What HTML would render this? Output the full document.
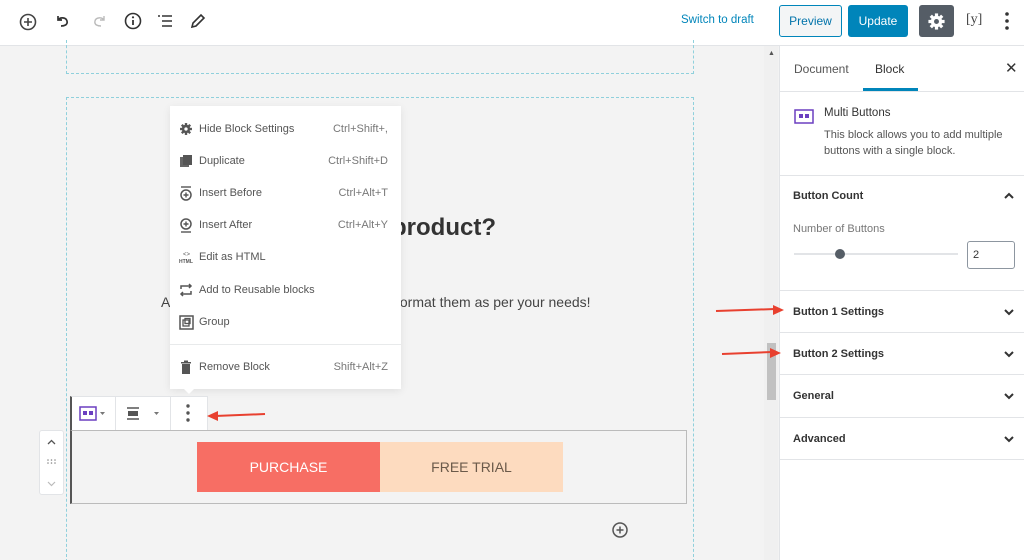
<!DOCTYPE html>
<html style="width:1024px;height:560px;overflow:hidden"><head><meta charset="utf-8"><style>
*{box-sizing:border-box;margin:0;padding:0}
body{width:1024px;height:560px;overflow:hidden;background:#f3f3f3;font-family:"Liberation Sans",sans-serif;position:relative;color:#333}
.a{position:absolute}
.hdr{left:0;top:0;width:1024px;height:46px;background:#fff;border-bottom:1px solid #e2e4e7}
.dash{border:1px dashed #8fd0dc}
.menu{left:170px;top:106px;width:231px;height:283px;background:#fff;box-shadow:0 2px 8px rgba(0,0,0,.08);font-size:11px;color:#555}
.mi{position:absolute;left:0;width:231px;height:20px;line-height:20px}
.mi .t{position:absolute;left:29px}
.mi .k{position:absolute;right:13px;color:#777}
.mi svg{position:absolute;left:9px;top:3px}
.side{left:779px;top:46px;width:245px;height:514px;background:#fff;border-left:1px solid #e2e4e7}
.row{position:absolute;left:0;width:245px;border-top:1px solid #e2e4e7;font-size:11px;font-weight:bold;color:#333}
.row span{position:absolute;left:13px}
.chev{position:absolute;right:10px}
</style></head><body>
<div class="a hdr">
<svg class="a" style="left:18px;top:12px" width="20" height="20" viewBox="0 0 20 20"><circle cx="10" cy="10" r="7.5" fill="none" stroke="#444" stroke-width="1.6"/><path d="M10 6v8M6 10h8" stroke="#444" stroke-width="1.6"/></svg>
<svg class="a" style="left:54px;top:12px" width="18" height="18" viewBox="0 0 18 18"><path d="M4 4v4h4M4 8c2-3 8-3 9 1s-3 5-6 5" fill="none" stroke="#333" stroke-width="1.7"/></svg>
<svg class="a" style="left:90px;top:12px" width="18" height="18" viewBox="0 0 18 18"><path d="M14 4v4h-4M14 8c-2-3-8-3-9 1s3 5 6 5" fill="none" stroke="#bbb" stroke-width="1.4"/></svg>
<svg class="a" style="left:123px;top:11px" width="20" height="20" viewBox="0 0 20 20"><circle cx="10" cy="10" r="7.5" fill="none" stroke="#333" stroke-width="1.6"/><path d="M10 9v5" stroke="#333" stroke-width="1.8"/><circle cx="10" cy="6.3" r="1.1" fill="#333"/></svg>
<svg class="a" style="left:156px;top:13px" width="18" height="16" viewBox="0 0 18 16"><path d="M2 3h2M6 3h10M6 8h10M6 13h10" stroke="#333" stroke-width="1.6"/></svg>
<svg class="a" style="left:189px;top:12px" width="18" height="18" viewBox="0 0 18 18"><path d="M3 15l1-4 8-8 3 3-8 8z" fill="none" stroke="#333" stroke-width="1.6"/></svg>
<div class="a" style="left:681px;top:14px;font-size:11.5px;color:#0085ba">Switch to draft</div>
<div class="a" style="left:779px;top:5px;width:63px;height:32px;border:1px solid #0085ba;border-radius:3px;background:#f3f5f6;color:#0073aa;font-size:12px;line-height:30px;text-align:center">Preview</div>
<div class="a" style="left:848px;top:5px;width:60px;height:32px;border-radius:3px;background:#0085ba;color:#fff;font-size:12px;line-height:32px;text-align:center">Update</div>
<div class="a" style="left:919px;top:5px;width:35px;height:32px;border-radius:3px;background:#555d66"></div>
<svg class="a" style="left:927px;top:12px" width="19" height="19" viewBox="0 0 20 20"><g fill="#fff"><circle cx="10" cy="10" r="6"/><rect x="8.3" y="1.5" width="3.4" height="17"/><rect x="8.3" y="1.5" width="3.4" height="17" transform="rotate(45 10 10)"/><rect x="8.3" y="1.5" width="3.4" height="17" transform="rotate(90 10 10)"/><rect x="8.3" y="1.5" width="3.4" height="17" transform="rotate(135 10 10)"/></g><circle cx="10" cy="10" r="2.6" fill="#555d66"/></svg>
<div class="a" style="left:966px;top:12px;font-size:14px;color:#444;font-family:'Liberation Serif',serif">[y]</div>
<svg class="a" style="left:1003px;top:11px" width="8" height="20"><circle cx="4" cy="3" r="1.8" fill="#333"/><circle cx="4" cy="10" r="1.8" fill="#333"/><circle cx="4" cy="17" r="1.8" fill="#333"/></svg>
</div>

<div class="a dash" style="left:66px;top:40px;width:628px;height:34px;border-top:none"></div>
<div class="a dash" style="left:66px;top:97px;width:628px;height:470px;border-bottom:none"></div>
<div class="a" style="left:764px;top:46px;width:14px;height:514px;background:#f0f0f0"></div>
<div class="a" style="left:767px;top:343px;width:9px;height:57px;background:#c1c1c1"></div>
<div class="a" style="left:768px;top:50px;font-size:7px;color:#555">▲</div>

<div class="a" style="left:392px;top:214px;font-size:24px;font-weight:bold;color:#333">product?</div>
<div class="a" style="left:161px;top:294px;font-size:14px;color:#444">A</div>
<div class="a" style="left:396px;top:294px;font-size:14px;color:#444">format them as per your needs!</div>

<div class="a menu">
<div class="mi" style="top:13px"><svg width="14" height="14" viewBox="0 0 20 20"><g fill="#555"><circle cx="10" cy="10" r="6"/><rect x="8.3" y="1.5" width="3.4" height="17"/><rect x="8.3" y="1.5" width="3.4" height="17" transform="rotate(45 10 10)"/><rect x="8.3" y="1.5" width="3.4" height="17" transform="rotate(90 10 10)"/><rect x="8.3" y="1.5" width="3.4" height="17" transform="rotate(135 10 10)"/></g><circle cx="10" cy="10" r="2.4" fill="#fff"/></svg><span class="t">Hide Block Settings</span><span class="k">Ctrl+Shift+,</span></div>
<div class="mi" style="top:45px"><svg width="14" height="14"><rect x="1" y="3" width="9" height="10" fill="#666"/><rect x="4" y="1" width="9" height="10" fill="#555"/></svg><span class="t">Duplicate</span><span class="k">Ctrl+Shift+D</span></div>
<div class="mi" style="top:77px"><svg width="14" height="15"><path d="M2 1h10" stroke="#555" stroke-width="1.4"/><circle cx="7" cy="9" r="5" fill="none" stroke="#555" stroke-width="1.5"/><path d="M7 6.5v5M4.5 9h5" stroke="#555" stroke-width="1.4"/></svg><span class="t">Insert Before</span><span class="k">Ctrl+Alt+T</span></div>
<div class="mi" style="top:109px"><svg width="14" height="15"><path d="M2 14h10" stroke="#555" stroke-width="1.4"/><circle cx="7" cy="6" r="5" fill="none" stroke="#555" stroke-width="1.5"/><path d="M7 3.5v5M4.5 6h5" stroke="#555" stroke-width="1.4"/></svg><span class="t">Insert After</span><span class="k">Ctrl+Alt+Y</span></div>
<div class="mi" style="top:141px"><svg width="16" height="14"><text x="4" y="6" font-size="6" fill="#555" font-family="Liberation Sans">&lt;&gt;</text><text x="0" y="13" font-size="5" font-weight="bold" fill="#555" font-family="Liberation Sans">HTML</text></svg><span class="t">Edit as HTML</span></div>
<div class="mi" style="top:174px"><svg width="14" height="14"><path d="M2 6V3h10M10 1l2 2-2 2M12 8v3H2M4 13l-2-2 2-2" fill="none" stroke="#555" stroke-width="1.5"/></svg><span class="t">Add to Reusable blocks</span></div>
<div class="mi" style="top:206px"><svg width="15" height="15"><rect x="1" y="1" width="13" height="13" fill="none" stroke="#555" stroke-width="1.5"/><rect x="4" y="5" width="6" height="6" fill="none" stroke="#555" stroke-width="1.3"/><rect x="6" y="3.5" width="5" height="5" fill="none" stroke="#555" stroke-width="1.3"/></svg><span class="t">Group</span></div>
<div class="a" style="left:0;top:238px;width:231px;border-top:1px solid #e8eaeb"></div>
<div class="mi" style="top:251px"><svg width="14" height="14"><rect x="3" y="4" width="8" height="10" fill="#555"/><rect x="2" y="2" width="10" height="1.5" fill="#555"/><rect x="5" y="0.5" width="4" height="1.5" fill="#555"/></svg><span class="t">Remove Block</span><span class="k">Shift+Alt+Z</span></div>
</div>
<div class="a" style="left:183px;top:388px;width:0;height:0;border-left:6px solid transparent;border-right:6px solid transparent;border-top:6px solid #fff"></div>

<div class="a" style="left:70px;top:396px;width:138px;height:35px;background:#fff;border:1px solid #e2e4e7;border-left:2px solid #555"></div>
<div class="a" style="left:115px;top:397px;width:1px;height:33px;background:#e2e4e7"></div>
<div class="a" style="left:170px;top:397px;width:1px;height:33px;background:#e2e4e7"></div>
<svg class="a" style="left:79px;top:406px" width="30" height="15"><rect x="1" y="1" width="16" height="13" fill="none" stroke="#6b3fc0" stroke-width="1.5"/><rect x="4" y="5" width="4" height="4" fill="#6b3fc0"/><rect x="10" y="5" width="4" height="4" fill="#6b3fc0"/><path d="M21 6h5l-2.5 3z" fill="#777"/></svg>
<svg class="a" style="left:125px;top:406px" width="40" height="15"><path d="M2 2h12M2 13h12" stroke="#555" stroke-width="1.4"/><rect x="3" y="5" width="10" height="5" fill="#555"/><path d="M29 6h5l-2.5 3z" fill="#777"/></svg>
<svg class="a" style="left:184px;top:403px" width="8" height="20"><circle cx="4" cy="3" r="1.7" fill="#555"/><circle cx="4" cy="10" r="1.7" fill="#555"/><circle cx="4" cy="17" r="1.7" fill="#555"/></svg>

<div class="a" style="left:70px;top:430px;width:617px;height:74px;border:1px solid #bbb;border-left:2px solid #555"></div>
<div class="a" style="left:197px;top:442px;width:183px;height:50px;background:#f76e64;color:#fff;font-size:14px;line-height:50px;text-align:center">PURCHASE</div>
<div class="a" style="left:380px;top:442px;width:183px;height:50px;background:#fddbbf;color:#6b5a4a;font-size:14px;line-height:50px;text-align:center">FREE TRIAL</div>

<div class="a" style="left:39px;top:430px;width:25px;height:65px;background:#fff;border:1px solid #e2e4e7;border-radius:3px"></div>
<svg class="a" style="left:39px;top:430px" width="25" height="65"><path d="M9 14l3.5-3.5L16 14" fill="none" stroke="#555" stroke-width="1.3"/><g fill="#888"><circle cx="9" cy="30" r=".8"/><circle cx="12.5" cy="30" r=".8"/><circle cx="16" cy="30" r=".8"/><circle cx="9" cy="33" r=".8"/><circle cx="12.5" cy="33" r=".8"/><circle cx="16" cy="33" r=".8"/></g><path d="M9 52l3.5 3.5L16 52" fill="none" stroke="#bbb" stroke-width="1.2"/></svg>
<svg class="a" style="left:611px;top:521px" width="18" height="18"><circle cx="9" cy="9" r="7" fill="none" stroke="#555" stroke-width="1.5"/><path d="M9 5.5v7M5.5 9h7" stroke="#555" stroke-width="1.5"/></svg>

<div class="a side">
<div class="a" style="left:14px;top:16px;font-size:12px;color:#555">Document</div>
<div class="a" style="left:95px;top:16px;font-size:12px;color:#333">Block</div>
<div class="a" style="left:83px;top:42px;width:55px;height:3px;background:#0085ba"></div>
<div class="a" style="left:225px;top:13px;font-size:15px;color:#333">✕</div>
<div class="a" style="left:0;top:45px;width:245px;border-top:1px solid #e2e4e7"></div>
<svg class="a" style="left:14px;top:63px" width="20" height="16"><rect x="1" y="1" width="18" height="13" fill="none" stroke="#6b3fc0" stroke-width="1.5"/><rect x="5" y="5" width="4" height="4" fill="#6b3fc0"/><rect x="11" y="5" width="4" height="4" fill="#6b3fc0"/></svg>
<div class="a" style="left:44px;top:61px;font-size:11.5px;color:#333">Multi Buttons</div>
<div class="a" style="left:44px;top:81px;font-size:11px;color:#555;line-height:16px;width:200px">This block allows you to add multiple buttons with a single block.</div>
<div class="row" style="top:129px;height:115px"><span style="top:14px">Button Count</span><svg class="chev" style="top:15px" width="12" height="10"><path d="M2 7l4-4 4 4" fill="none" stroke="#333" stroke-width="2"/></svg>
<span style="top:47px;font-weight:normal;color:#777">Number of Buttons</span>
<div class="a" style="left:14px;top:77px;width:164px;height:2px;background:#e2e4e7"></div>
<div class="a" style="left:55px;top:73px;width:10px;height:10px;border-radius:50%;background:#555d66"></div>
<div class="a" style="left:187px;top:65px;width:48px;height:28px;border:1px solid #8d96a0;border-radius:3px;font-weight:normal;font-size:11px;line-height:26px;padding-left:5px">2</div>
</div>
<div class="row" style="top:244px;height:42px"><span style="top:15px">Button 1 Settings</span><svg class="chev" style="top:16px" width="12" height="10"><path d="M2 3l4 4 4-4" fill="none" stroke="#333" stroke-width="2"/></svg></div>
<div class="row" style="top:286px;height:42px"><span style="top:15px">Button 2 Settings</span><svg class="chev" style="top:16px" width="12" height="10"><path d="M2 3l4 4 4-4" fill="none" stroke="#333" stroke-width="2"/></svg></div>
<div class="row" style="top:328px;height:43px"><span style="top:15px">General</span><svg class="chev" style="top:16px" width="12" height="10"><path d="M2 3l4 4 4-4" fill="none" stroke="#333" stroke-width="2"/></svg></div>
<div class="row" style="top:371px;height:43px;border-bottom:1px solid #e2e4e7"><span style="top:15px">Advanced</span><svg class="chev" style="top:16px" width="12" height="10"><path d="M2 3l4 4 4-4" fill="none" stroke="#333" stroke-width="2"/></svg></div>
</div>

<svg class="a" style="left:0;top:0" width="1024" height="560">
<path d="M215 416L265 414" stroke="#e8402f" stroke-width="2"/><path d="M207 416l11-5v10z" fill="#e8402f"/>
<path d="M716 311L775 309" stroke="#e8402f" stroke-width="2"/><path d="M784 310l-11-5v10z" fill="#e8402f"/>
<path d="M722 354L772 352" stroke="#e8402f" stroke-width="2"/><path d="M781 353l-11-5v10z" fill="#e8402f"/>
</svg>
</body></html>
